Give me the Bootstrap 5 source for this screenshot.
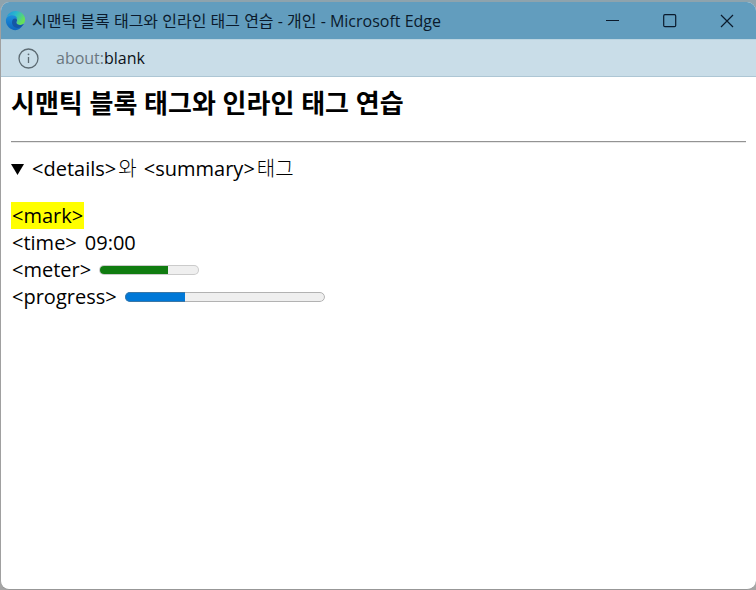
<!DOCTYPE html>
<html lang="ko">
<head>
<meta charset="utf-8">
<meta name="viewport" content="width=device-width, initial-scale=1">
<title>시맨틱 블록 태그와 인라인 태그 연습</title>
<link rel="stylesheet" href="https://cdn.jsdelivr.net/npm/bootstrap@5.3.0/dist/css/bootstrap.min.css">
<style>
body { background: linear-gradient(#8ea3ad 0 40px, #a5a5a5 40px); font-family: "Open Sans", "Noto Sans CJK KR", sans-serif; color: #000; }
.app-window { border-left: 1px solid #a0a0a0; border-bottom: 1px solid #979797; border-radius: 9px; margin-top: 2px; height: calc(100vh - 2px); }
.title-bar { background: #629dbe; height: 37px; color: #0a1a2c; font-size: 16px; padding-left: 4px; }
.title-text { margin-left: 6px; }
.win-btn { width: 57px; color: #0a1a2c; }
.window-controls { margin-right: 1px; }
.address-bar { background: #c9dde8; border-top: 1px solid #bad4e1; border-bottom: 1px solid #adc6d4; height: 38px; padding-left: 17px; font-size: 16px; gap: 17px; color: #0b1118; }
.address-bar button { color: #5d6b73; }
.scheme { color: #69777f; }
.page-body { padding: 10px 10px 0; font-size: 20px; line-height: 27px; }
.page-title { font-size: 26px; font-weight: 700; line-height: 32px; margin-bottom: 22px; }
.rule { opacity: 1; border: 0; border-top: 1px solid #939393; border-bottom: 1px solid #e8e8e8; height: 2px; margin: 0 0 12px; }
summary { list-style: none; display: flex; align-items: center; gap: 8px; margin-bottom: 20px; }
.hangul { font-family: "Noto Sans CJK KR Light", "Noto Sans CJK KR", sans-serif; font-weight: 300; margin: 0 2px; line-height: 1; }
.page-body mark { background: #ff0; color: #000; padding: 0 1px; display: inline-block; }
.line { padding-left: 1px; display: flex; align-items: center; gap: 8px; }
meter { width: 100px; height: 20px; }
progress { width: 200px; height: 20px; accent-color: #0078d7; }
</style>
</head>
<body>
<div class="app-window bg-white overflow-hidden d-flex flex-column">
  <header class="title-bar d-flex align-items-stretch flex-shrink-0">
    <svg class="align-self-center flex-shrink-0" width="21" height="21" viewBox="0 0 24 24" aria-hidden="true">
      <defs>
        <linearGradient id="wave" x1="0" y1="0" x2="1" y2=".5"><stop offset="0" stop-color="#1b8fdc"/><stop offset=".5" stop-color="#2bb8cc"/><stop offset="1" stop-color="#66e058"/></linearGradient>
        <linearGradient id="deep" x1="0" y1="0" x2="0" y2="1"><stop offset="0" stop-color="#1c8fdc"/><stop offset="1" stop-color="#0d65be"/></linearGradient>
      </defs>
      <path fill="url(#wave)" d="M1 12C1 6 6 1 12 1c7 0 11 5 11 10 0 4-3 6-6 6-2 0-4-1-4-2s1-1 1-3c0-3-3-6-7-6-3 0-6 2-6 6Z"/>
      <path fill="url(#deep)" d="M1 12C1 8 5 6 8 6c3 0 5 1 6 4-2-1-5 0-5 3 0 5 6 8 11 5-2 3-5 5-8 5C6 23 1 18 1 12Z"/>
      <path fill="#1557a5" d="M8 14c0-3 2-5 5-4 1 1 1 2 0 4 0 3 5 4 8 2 1 0 0 1-1 2-5 5-12 2-12-4Z"/>
    </svg>
    <span class="title-text align-self-center text-nowrap">시맨틱 블록 태그와 인라인 태그 연습 - 개인 - Microsoft Edge</span>
    <div class="window-controls d-flex ms-auto">
      <button type="button" class="win-btn btn border-0 rounded-0 p-0" aria-label="최소화"><svg class="d-block mx-auto" width="14" height="14" fill="none" stroke="currentColor"><path d="M0 6.5h13"/></svg></button>
      <button type="button" class="win-btn btn border-0 rounded-0 p-0" aria-label="최대화"><svg class="d-block mx-auto" width="14" height="14" fill="none" stroke="currentColor" stroke-width="1.2"><rect x=".7" y=".7" width="12" height="12" rx="1.2"/></svg></button>
      <button type="button" class="win-btn btn border-0 rounded-0 p-0" aria-label="닫기"><svg class="d-block mx-auto" width="14" height="14" fill="none" stroke="currentColor" stroke-width="1.2"><path d="m1 1 12 12M13 1 1 13"/></svg></button>
    </div>
  </header>
  <div class="address-bar d-flex align-items-center flex-shrink-0">
    <button type="button" class="btn border-0 p-0" aria-label="사이트 정보"><svg class="d-block" width="21" height="21" fill="none" stroke="currentColor" stroke-width="1.3"><circle cx="10.5" cy="10.5" r="9.5"/><path d="M10.5 9v6"/><circle cx="10.5" cy="6.3" r=".9" fill="currentColor" stroke="none"/></svg></button>
    <span><span class="scheme">about:</span>blank</span>
  </div>
  <main class="page-body flex-grow-1">
    <h1 class="page-title">시맨틱 블록 태그와 인라인 태그 연습</h1>
    <hr class="rule">
    <details open>
      <summary><svg width="13" height="12" aria-hidden="true"><path d="M0 1h13L6.500 12Z"/></svg><span>&lt;details&gt;<span class="hangul">와</span> &lt;summary&gt;<span class="hangul">태그</span></span></summary>
      <mark>&lt;mark&gt;</mark>
      <div class="line"><span>&lt;time&gt;</span><time datetime="09:00">09:00</time></div>
      <div class="line"><label for="level">&lt;meter&gt;</label><meter id="level" min="0" max="100" value="69"></meter></div>
      <div class="line"><label for="task">&lt;progress&gt;</label><progress id="task" max="100" value="30"></progress></div>
    </details>
  </main>
</div>
<script src="https://cdn.jsdelivr.net/npm/bootstrap@5.3.0/dist/js/bootstrap.bundle.min.js"></script>
</body>
</html>
